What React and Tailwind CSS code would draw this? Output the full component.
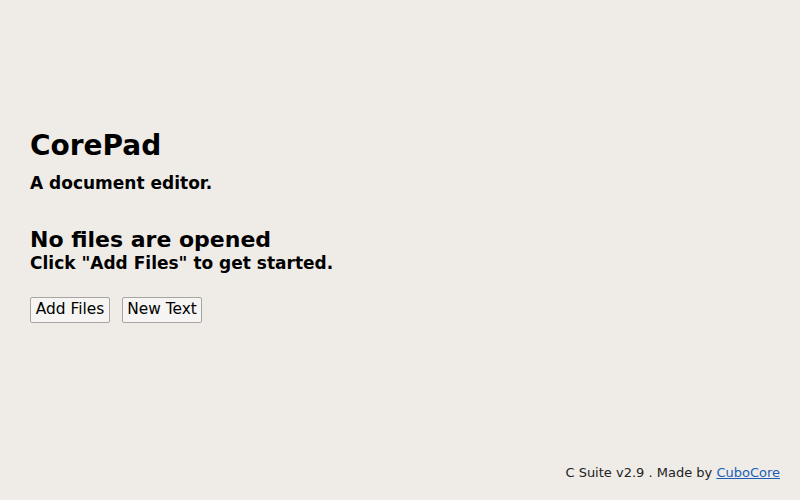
export default function App() {
  return (
    <div className="w-[800px] h-[500px] bg-[#efece8] flex flex-col text-black font-['DejaVu_Sans',sans-serif]">
      <div className="flex-1 flex flex-col px-[30px] pt-[130px]">
        <h1 className="text-[28px] font-bold leading-[32px]">CorePad</h1>
        <p className="text-[17px] font-bold mt-[10px] leading-[22px]">A document editor.</p>
        <p className="text-[22px] font-bold mt-[34px] leading-[24px]">No files are opened</p>
        <p className="text-[17px] font-bold leading-[22px]">Click "Add Files" to get started.</p>
        <div className="flex gap-[12px] mt-[23px]">
          <button className="w-[80px] h-[26px] text-[15.4px] bg-[#f6f5f3] border border-[#a8a5a1] rounded-[2px]">Add Files</button>
          <button className="w-[80px] h-[26px] text-[15.4px] bg-[#f6f5f3] border border-[#a8a5a1] rounded-[2px]">New Text</button>
        </div>
      </div>
      <div className="flex justify-end px-[20px] pb-[18px] text-[13px] text-[#222]">
        <span>C Suite v2.9 . Made by <a href="#" className="text-[#1a5fb4] underline">CuboCore</a></span>
      </div>
    </div>
  );
}
